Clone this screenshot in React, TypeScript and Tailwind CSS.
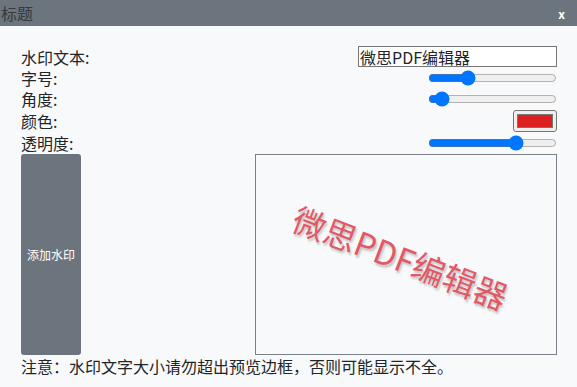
import { useState } from "react";

const font = "font-['Microsoft_YaHei','Noto_Sans_CJK_SC',sans-serif]";

export default function App() {
	const [text, setText] = useState("微思PDF编辑器");
	const [size, setSize] = useState(28);
	const [angle, setAngle] = useState(5);
	const [color, setColor] = useState("#dc1f1f");
	const [alpha, setAlpha] = useState(71);

	return (
		<div className={`w-[577px] h-[387px] bg-[#f8f9fa] text-[#212529] ${font}`}>
			<div className="flex items-center justify-between h-[26px] bg-[#6c757d] pl-[1px] pr-[12px]">
				<span className="text-[16px] leading-none text-[#343a40]">标题</span>
				<span className="text-[12px] font-bold text-white leading-none pt-[2px]">x</span>
			</div>

			<div className="pt-[20px] pl-[21px] pr-[20px]">
				<div className="flex items-center justify-between h-[21px]">
					<span className="text-[16px] leading-[18px]">水印文本:</span>
					<input
						type="text"
						value={text}
						onChange={e => setText(e.target.value)}
						className="w-[199px] h-[21px] border border-[#767676] bg-white px-[1px] text-[16px] leading-none outline-none"
					/>
				</div>
				<div className="flex items-center justify-between h-[21px]">
					<span className="text-[16px] leading-[18px]">字号:</span>
					<input
						type="range"
						value={size}
						onChange={e => setSize(+e.target.value)}
						className="w-[129px] m-0"
					/>
				</div>
				<div className="flex items-center justify-between h-[21px]">
					<span className="text-[16px] leading-[18px]">角度:</span>
					<input
						type="range"
						value={angle}
						onChange={e => setAngle(+e.target.value)}
						className="w-[129px] m-0"
					/>
				</div>
				<div className="flex items-center justify-between h-[23px]">
					<span className="text-[16px] leading-[18px]">颜色:</span>
					<input
						type="color"
						value={color}
						onChange={e => setColor(e.target.value)}
						className="w-[44px] h-[22px] p-[3px] border border-[#767676] rounded-[3px] bg-[#efefef] [&::-webkit-color-swatch-wrapper]:p-0 [&::-webkit-color-swatch]:border-[#777]"
					/>
				</div>
				<div className="flex items-center justify-between h-[22px]">
					<span className="text-[16px] leading-[18px]">透明度:</span>
					<input
						type="range"
						value={alpha}
						onChange={e => setAlpha(+e.target.value)}
						className="w-[129px] m-0"
					/>
				</div>

				<div className="flex justify-between h-[201px]">
					<button className="w-[60px] h-full bg-[#6c757d] rounded-[3px] text-white text-[12px]">
						添加水印
					</button>
					<div className="w-[302px] h-full border border-[#7a808a] flex items-center justify-center overflow-hidden">
						<span
							className="text-[33px] leading-none whitespace-nowrap text-[#dc3545] [text-shadow:2px_2px_2px_rgba(0,0,0,0.25)] mr-[12px] mt-[6px]"
							style={{ transform: `rotate(${16 + angle}deg)`, opacity: alpha / 100 + 0.1 }}
						>
							{text}
						</span>
					</div>
				</div>

				<p className="text-[16px] leading-[20px] mt-[1px]">注意：水印文字大小请勿超出预览边框，否则可能显示不全。</p>
			</div>
		</div>
	);
}
